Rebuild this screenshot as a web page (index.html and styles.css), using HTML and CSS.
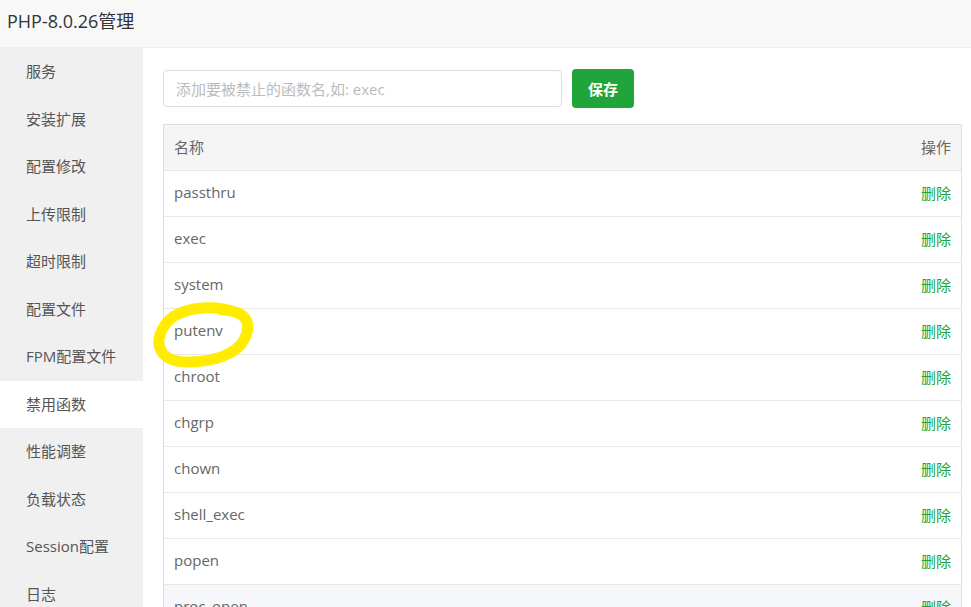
FILE: index.html
```html
<!DOCTYPE html>
<html lang="zh">
<head>
<meta charset="utf-8">
<title>PHP-8.0.26管理</title>
<link rel="stylesheet" href="styles.css">
</head>
<body>
<div class="window">
  <header class="title-bar">PHP-8.0.26管理</header>
  <div class="main">
    <nav class="sidebar">
      <div class="nav-item">服务</div>
      <div class="nav-item">安装扩展</div>
      <div class="nav-item">配置修改</div>
      <div class="nav-item">上传限制</div>
      <div class="nav-item">超时限制</div>
      <div class="nav-item">配置文件</div>
      <div class="nav-item">FPM配置文件</div>
      <div class="nav-item active">禁用函数</div>
      <div class="nav-item">性能调整</div>
      <div class="nav-item">负载状态</div>
      <div class="nav-item">Session配置</div>
      <div class="nav-item">日志</div>
    </nav>
    <section class="content">
      <div class="add-row">
        <input class="fn-input" type="text" placeholder="添加要被禁止的函数名,如: exec">
        <button class="btn-save">保存</button>
      </div>
      <div class="fn-table">
        <div class="row head"><span>名称</span><span>操作</span></div>
        <div class="row"><span>passthru</span><a class="del">删除</a></div>
        <div class="row"><span>exec</span><a class="del">删除</a></div>
        <div class="row"><span>system</span><a class="del">删除</a></div>
        <div class="row"><span>putenv</span><a class="del">删除</a></div>
        <div class="row"><span>chroot</span><a class="del">删除</a></div>
        <div class="row"><span>chgrp</span><a class="del">删除</a></div>
        <div class="row"><span>chown</span><a class="del">删除</a></div>
        <div class="row"><span>shell_exec</span><a class="del">删除</a></div>
        <div class="row"><span>popen</span><a class="del">删除</a></div>
        <div class="row hover"><span>proc_open</span><a class="del">删除</a></div>
      </div>
    </section>
  </div>
  <svg class="marker" width="971" height="607" viewBox="0 0 971 607">
    <path d="M238 313 C215 304 178 306 165 325 C152 344 160 362 188 362 C214 362 238 354 245 338 C252 322 246 311 222 310" fill="none" stroke="#ffec00" stroke-width="11" stroke-linecap="round" stroke-linejoin="round"/>
  </svg>
</div>
</body>
</html>
```
FILE: styles.css
```css
html, body {
  margin: 0;
  padding: 0;
  width: 971px;
  height: 607px;
  overflow: hidden;
  background: #fff;
}
body {
  font-family: "Open Sans", "Noto Sans CJK SC", sans-serif;
  font-size: 15px;
  color: #555;
}
.window {
  position: relative;
  width: 971px;
  height: 607px;
  overflow: hidden;
}
.title-bar {
  height: 47px;
  line-height: 42px;
  padding-left: 7px;
  font-size: 18px;
  color: #333;
  background: #f8f8f8;
  border-bottom: 1px solid #eee;
}
.main {
  display: flex;
  height: 559px;
  overflow: hidden;
}
.sidebar {
  width: 143px;
  flex: none;
  background: #f0f0f0;
}
.nav-item {
  height: 47.5px;
  line-height: 47.5px;
  padding-left: 26px;
  font-size: 15px;
  color: #555;
}
.nav-item.active {
  background: #fff;
}
.content {
  flex: 1;
  padding: 21px 10px 0 20px;
}
.add-row {
  display: flex;
  align-items: center;
  gap: 10px;
}
.fn-input {
  width: 399px;
  height: 37px;
  box-sizing: border-box;
  border: 1px solid #ddd;
  border-radius: 4px;
  padding: 0 12px;
  font-family: "Open Sans", "Noto Sans CJK SC", sans-serif;
  font-size: 15px;
  color: #555;
  outline: none;
}
.fn-input::placeholder {
  color: #bbb;
}
.btn-save {
  width: 62px;
  height: 39px;
  border: none;
  border-radius: 4px;
  background: #20a53a;
  color: #fff;
  font-family: "Noto Sans CJK SC", sans-serif;
  font-size: 15px;
  font-weight: bold;
}
.fn-table {
  margin-top: 16px;
  width: 799px;
  box-sizing: border-box;
  border: 1px solid #ddd;
  border-bottom: none;
}
.row {
  display: flex;
  justify-content: space-between;
  align-items: center;
  box-sizing: border-box;
  height: 46px;
  padding: 0 10px 3px;
  border-bottom: 1px solid #e8e8e8;
  color: #666;
}
.row.head {
  background: #f5f5f5;
}
.row.hover {
  background: #f5f7fa;
}
.del {
  color: #20a53a;
}
.marker {
  position: absolute;
  left: 0;
  top: 0;
  pointer-events: none;
}
```
